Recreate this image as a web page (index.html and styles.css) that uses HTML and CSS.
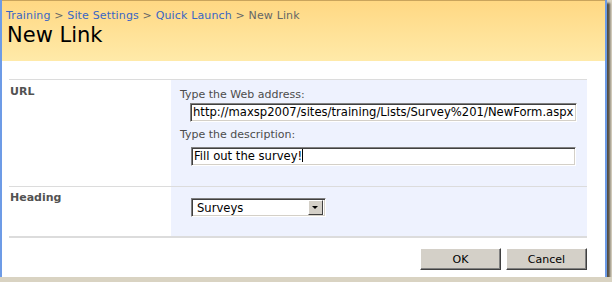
FILE: index.html
```html
<!DOCTYPE html>
<html lang="en">
<head>
  <meta charset="UTF-8">
  <title>New Link</title>
  <link rel="stylesheet" href="styles.css">
</head>
<body>
  <div class="window">
    <div class="header">
      <div class="crumbs">
        <a href="#">Training</a> &gt; <a href="#">Site Settings</a> &gt; <a href="#">Quick Launch</a> &gt; <span>New Link</span>
      </div>
      <h1>New Link</h1>
    </div>

    <div class="form">
      <div class="section">
        <div class="label">URL</div>
        <div class="field">
          <div class="hint">Type the Web address:</div>
          <div class="input">http://maxsp2007/sites/training/Lists/Survey%201/NewForm.aspx</div>
          <div class="hint">Type the description:</div>
          <div class="input desc">Fill out the survey!<span class="caret"></span></div>
        </div>
      </div>

      <div class="section last">
        <div class="label">Heading</div>
        <div class="field">
          <div class="select">
            <span class="value">Surveys</span>
            <span class="arrow"></span>
          </div>
        </div>
      </div>

      <div class="actions">
        <button>OK</button>
        <button>Cancel</button>
      </div>
    </div>
  </div>
</body>
</html>
```

FILE: styles.css
```css
body {
  margin: 0;
  background: #d9d3c2;
  font-family: "DejaVu Sans", sans-serif;
  font-size: 11px;
}
.window {
  width: 603px;
  height: 277px;
  background: #fff;
  border-left: 2px solid #6d9be6;
  border-right: 2px solid #6d9be6;
  box-shadow: 3px 3px 2px rgba(40, 35, 25, 0.75);
}
.header {
  height: 60px;
  border-top: 1px solid #c9a45c;
  background: linear-gradient(#ffd883, #ffeaa9);
  padding-left: 4px;
}
.crumbs {
  padding-top: 8px;
  color: #666;
  line-height: 14px;
  letter-spacing: 0.15px;
}
.crumbs a {
  color: #3a66c4;
  text-decoration: none;
}
h1 {
  margin: -1px 0 0 1px;
  font-weight: normal;
  font-size: 21px;
  line-height: 26px;
  color: #000;
}
.form {
  padding: 18px 18px 0 7px;
}
.section {
  display: flex;
  border-top: 1px solid #dcdcdc;
}
.section.last {
  border-bottom: 2px solid #dcdcdc;
}
.label {
  width: 162px;
  padding: 5px 0 0 1px;
  box-sizing: border-box;
  font-weight: bold;
  color: #525252;
  line-height: 14px;
}
.section.last .label {
  padding-top: 4px;
}
.field {
  flex: 1;
  background: #eef2fe;
  padding: 8px 10px 20px 9px;
}
.section.last .field {
  padding: 11px 10px 19px 20px;
}
.hint {
  color: #4c4c4c;
  line-height: 14px;
}
.input {
  margin: 1px 0 6px 10px;
  height: 15px;
  padding: 1px 2px;
  background: #fff;
  border: 1px solid;
  border-color: #808080 #fff #fff #808080;
  box-shadow: inset 1px 1px 0 #404040, inset -1px -1px 0 #d4d0c8;
  font-size: 11.6px;
  line-height: 15px;
  white-space: nowrap;
  overflow: hidden;
  color: #000;
}
.input.desc {
  margin: 5px 1px 0 11px;
}
.caret {
  display: inline-block;
  width: 1px;
  height: 13px;
  background: #000;
  vertical-align: -2px;
}
.select {
  width: 129px;
  height: 15px;
  display: flex;
  align-items: center;
  background: #fff;
  border: 1px solid;
  border-color: #808080 #fff #fff #808080;
  box-shadow: inset 1px 1px 0 #404040, inset -1px -1px 0 #d4d0c8;
  padding: 1px 2px;
}
.select .value {
  flex: 1;
  padding-left: 3px;
  font-size: 11.6px;
  color: #000;
}
.arrow {
  width: 15px;
  height: 15px;
  box-sizing: border-box;
  background: #d4d0c8;
  border: 1px solid;
  border-color: #fff #404040 #404040 #fff;
  position: relative;
}
.arrow::after {
  content: '';
  position: absolute;
  left: 3px;
  top: 5px;
  border-left: 3px solid transparent;
  border-right: 3px solid transparent;
  border-top: 3px solid #000;
}
.actions {
  display: flex;
  justify-content: flex-end;
  gap: 5px;
  padding-top: 10px;
}
button {
  width: 81px;
  height: 22px;
  background: #d4d0c8;
  border: 1px solid;
  border-color: #fff #404040 #404040 #fff;
  box-shadow: inset -1px -1px 0 #808080;
  font-family: "DejaVu Sans", sans-serif;
  font-size: 11px;
  color: #000;
  padding: 0;
}
```
